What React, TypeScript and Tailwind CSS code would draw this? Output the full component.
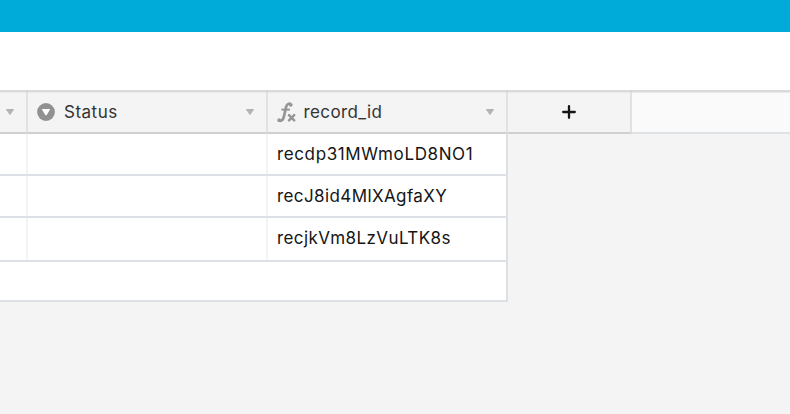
import React from "react";

const records = [
  { id: "recdp31MWmoLD8NO1", height: "h-[42px]", text: "tracking-[0.62px]" },
  { id: "recJ8id4MlXAgfaXY", height: "h-[42px]", text: "tracking-[0.4px]" },
  { id: "recjkVm8LzVuLTK8s", height: "h-11", text: "pb-0.5 tracking-[0.4px]" },
];

function Caret() {
  return (
    <svg width="8" height="6" viewBox="0 0 8 6" className="shrink-0">
      <path d="M0.5 0h7q.8 0 .3.8L4.6 5.5q-.6.7-1.2 0L.2.8Q-.3 0 .5 0Z" fill="#b3b3b3" />
    </svg>
  );
}

function SelectIcon() {
  return (
    <svg width="18" height="18" viewBox="0 0 18 18" className="shrink-0">
      <circle cx="9" cy="9" r="8.9" fill="#919191" />
      <path d="M5.5 6h7q.8 0 .4.7L9.7 12q-.7.8-1.4 0L5.1 6.7Q4.7 6 5.5 6Z" fill="#fff" />
    </svg>
  );
}

function FormulaIcon() {
  return (
    <svg width="19" height="21" viewBox="0 0 19 21" fill="none" stroke="#969696" className="shrink-0">
      <path d="M14.2 2.8C13.2.9 10 1.1 9.1 4.9L6.9 14.6c-.7 3.3-2.9 4.8-5 3.9" strokeWidth="2.7" strokeLinecap="round" />
      <path d="M4.4 7.6h8.6" strokeWidth="2" />
      <circle cx="13.7" cy="3.1" r="1.7" fill="#969696" stroke="none" />
      <circle cx="2.1" cy="17.9" r="1.7" fill="#969696" stroke="none" />
      <path d="m12 13.2 5.2 5.2m0-5.2-5.2 5.2" strokeWidth="2.5" strokeLinecap="round" />
    </svg>
  );
}

export default function App() {
  return (
    <div className="flex h-[414px] w-[790px] flex-col overflow-hidden bg-[#f4f4f4] font-['Inter','Liberation_Sans',sans-serif] text-[17px] leading-6 text-[#151515]">
      <div className="h-8 shrink-0 bg-[#00aad9]" />
      <div className="h-[58px] shrink-0 bg-white" />
      <header className="flex h-11 shrink-0 bg-[linear-gradient(#dadada_0_2px,#eaeaea_2px_3px,transparent_3px)] tracking-[0.5px] text-[#333]">
        <div className="flex w-7 items-center border-r-2 border-b-2 border-r-[#c9cfd480] border-b-[#d0d0d0] pt-0.5 pl-1.5">
          <Caret />
        </div>
        <div className="flex w-60 items-center border-r-2 border-b-2 border-r-[#c9cfd480] border-b-[#d0d0d0] pt-0.5 pr-3 pl-[9px]">
          <SelectIcon />
          <span className="ml-[9px] flex-1">Status</span>
          <Caret />
        </div>
        <div className="flex w-60 items-center border-r-2 border-b-2 border-r-[#c9cfd480] border-b-[#d0d0d0] pt-0.5 pr-3 pl-[9px]">
          <FormulaIcon />
          <span className="ml-[7.5px] flex-1 tracking-[0.4px]">record_id</span>
          <Caret />
        </div>
        <div className="flex w-[124px] items-center justify-center border-r-2 border-b-2 border-r-[#c9cfd480] border-b-[#d0d0d0] pt-0.5">
          <svg width="14" height="14" viewBox="0 0 14 14" fill="none" stroke="#151515" strokeWidth="2.3" strokeLinecap="round">
            <path d="M7 1.2v11.6M1.2 7h11.6" />
          </svg>
        </div>
        <div className="mt-[3px] flex-1 border-b-2 border-[#dfe2e5] bg-[#fafafa]" />
      </header>
      <main className="w-[508px] border-r-2 border-[#dde1e6] bg-white">
        {records.map((record) => (
          <div key={record.id} className={`flex border-b-2 border-[#dde1e6] ${record.height}`}>
            <div className="w-7 border-r-2 border-[#f3f3f3]" />
            <div className="w-60 border-r-2 border-[#f3f3f3]" />
            <div className={`flex flex-1 items-center pl-[9px] ${record.text}`}>{record.id}</div>
          </div>
        ))}
        <div className="h-10 border-b-2 border-[#dde1e6]" />
      </main>
    </div>
  );
}
